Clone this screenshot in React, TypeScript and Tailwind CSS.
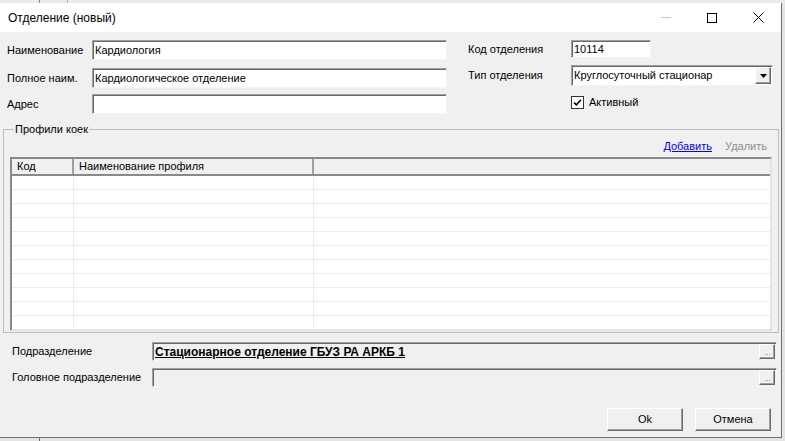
import React from "react";

const sunken =
  "border border-t-[#a0a0a0] border-l-[#a0a0a0] border-r-[#f5f5f5] border-b-[#f5f5f5] shadow-[inset_1px_1px_0_#696969]";
const raised =
  "border border-t-[#fff] border-l-[#fff] border-r-[#696969] border-b-[#696969] shadow-[inset_-1px_-1px_0_#a0a0a0]";

function Field({ label, value, w }: { label: string; value: string; w: string }) {
  return (
    <div className="flex items-center h-[20px]">
      <span className="w-[85px] shrink-0">{label}</span>
      <div className={`${w} h-[20px] bg-white ${sunken} flex items-center pl-[2px] overflow-hidden whitespace-nowrap`}>
        {value}
      </div>
    </div>
  );
}

function EllipsisBtn() {
  return (
    <div className={`w-[16px] h-[15px] ${raised} bg-[#f0f0f0] flex items-end justify-center gap-[1px] pb-[3px] shrink-0`}>
      <div className="w-px h-px bg-[#9a9a9a]" />
      <div className="w-px h-px bg-[#9a9a9a]" />
      <div className="w-px h-px bg-[#9a9a9a]" />
    </div>
  );
}

export default function App() {
  const rows = Array.from({ length: 12 });

  return (
    <div className="w-[785px] h-[441px] overflow-hidden bg-[#f0f0f0] font-['Liberation_Sans',Arial,sans-serif] text-[11px] text-black">
      {/* background app strip */}
      <div className="h-[3px] flex bg-[#e9e9e9]">
        <div className="w-[40px] border-r border-[#8a8a8a]" />
        <div className="w-[28px] border-r border-[#b0b0b0]" />
      </div>

      <div className="flex h-[435px]">
        {/* window */}
        <div className="w-[782px] flex flex-col border-r border-b border-[#6f6f6f]">
          {/* title bar */}
          <div className="h-[29px] bg-white flex items-center shrink-0">
            <span className="pl-[8px] text-[12px] font-['Liberation_Sans',sans-serif]">Отделение (новый)</span>
            <div className="ml-auto flex items-center h-full">
              <div className="w-[46px] flex justify-center">
                <div className="w-[10px] h-px bg-[#c8c8c8]" />
              </div>
              <div className="w-[46px] flex justify-center">
                <div className="w-[10px] h-[10px] border border-black" />
              </div>
              <div className="w-[46px] flex justify-center">
                <svg width="11" height="11" viewBox="0 0 11 11">
                  <path d="M0.5 0.5 L10.5 10.5 M10.5 0.5 L0.5 10.5" stroke="#000" strokeWidth="1" />
                </svg>
              </div>
            </div>
          </div>

          {/* client area */}
          <div className="flex-1 flex flex-col bg-[#f0f0f0]">
            {/* top fields */}
            <div className="flex pt-[8px]">
              <div className="w-[447px] pl-[7px] flex flex-col">
                <Field label="Наименование" value="Кардиология" w="w-[355px]" />
                <div className="mt-[8px]">
                  <Field label="Полное наим." value="Кардиологическое отделение" w="w-[355px]" />
                </div>
                <div className="mt-[6px]">
                  <Field label="Адрес" value="" w="w-[355px]" />
                </div>
              </div>
              <div className="ml-[21px] flex flex-col">
                <div className="flex items-center h-[18px]">
                  <span className="w-[103px]">Код отделения</span>
                  <div className={`w-[80px] h-[18px] bg-white ${sunken} flex items-center pl-[2px]`}>10114</div>
                </div>
                <div className="flex items-center h-[21px] mt-[7px]">
                  <span className="w-[103px]">Тип отделения</span>
                  <div className={`w-[202px] h-[21px] bg-white ${sunken} flex items-center pl-[2px]`}>
                    <span>Круглосуточный стационар</span>
                    <div className={`ml-auto mr-[1px] w-[16px] h-[17px] ${raised} bg-[#f0f0f0] flex items-center justify-center`}>
                      <svg width="7" height="4" viewBox="0 0 7 4">
                        <path d="M0 0 H7 L3.5 4 Z" fill="#000" />
                      </svg>
                    </div>
                  </div>
                </div>
                <div className="flex items-center h-[13px] mt-[10px] ml-[103px]">
                  <div className="w-[13px] h-[13px] bg-white border border-[#333] flex items-center justify-center">
                    <svg width="9" height="9" viewBox="0 0 9 9">
                      <path d="M1 4.5 L3.3 6.8 L8 1.8" stroke="#000" strokeWidth="1.6" fill="none" />
                    </svg>
                  </div>
                  <span className="ml-[5px]">Активный</span>
                </div>
              </div>
            </div>

            {/* group box */}
            <fieldset className="mt-[9px] ml-[3px] w-[776px] border border-[#bcbcbc] px-[6px] pb-[1px]">
              <legend className="ml-[4px] px-[1px] leading-[13px]">Профили коек</legend>
              <div className="flex justify-end items-center gap-[13px] pr-[5px] h-[15px] mt-[3px] mb-[3px]">
                <span className="text-[#0000ff] underline">Добавить</span>
                <span className="text-[#8d8d8d]">Удалить</span>
              </div>
              <div className="h-[174px] border-2 border-t-[#8a8a8a] border-l-[#8a8a8a] border-r-[#e3e3e3] border-b-[#e3e3e3] bg-white overflow-hidden flex flex-col">
                <div className="flex h-[17px] shrink-0 bg-[#f0f0f0] border-b-2 border-[#8a8a8a]">
                  <div className="w-[62px] border-r-2 border-r-[#a0a0a0] pl-[5px] flex items-center">Код</div>
                  <div className="w-[240px] border-r-2 border-r-[#a0a0a0] pl-[5px] flex items-center">Наименование профиля</div>
                  <div className="flex-1" />
                </div>
                {rows.map((_, i) => (
                  <div key={i} className="flex h-[14px] shrink-0 border-b border-[#ececec]">
                    <div className="w-[62px] border-r border-[#ececec]" />
                    <div className="w-[240px] border-r border-[#ececec]" />
                    <div className="flex-1" />
                  </div>
                ))}
              </div>
            </fieldset>

            {/* subdivision fields */}
            <div className="flex items-center mt-[9px] pl-[12px] h-[19px]">
              <span className="w-[140px]">Подразделение</span>
              <div className={`w-[625px] h-[19px] bg-[#f0f0f0] ${sunken} flex items-center pl-[2px] pr-[1px]`}>
                <span className="font-bold underline text-[12px]">Стационарное отделение ГБУЗ РА АРКБ 1</span>
                <div className="ml-auto"><EllipsisBtn /></div>
              </div>
            </div>
            <div className="flex items-center mt-[7px] pl-[12px] h-[19px]">
              <span className="w-[140px]">Головное подразделение</span>
              <div className={`w-[625px] h-[19px] bg-[#f0f0f0] ${sunken} flex items-center pl-[2px] pr-[1px]`}>
                <div className="ml-auto"><EllipsisBtn /></div>
              </div>
            </div>

            {/* buttons */}
            <div className="flex justify-end gap-[12px] pr-[10px] mt-[21px]">
              <div className={`w-[76px] h-[23px] ${raised} bg-[#f0f0f0] flex items-center justify-center`}>Ok</div>
              <div className={`w-[76px] h-[23px] ${raised} bg-[#f0f0f0] flex items-center justify-center`}>Отмена</div>
            </div>
          </div>
        </div>
        <div className="w-[3px] bg-[#e4e4e4]" />
      </div>

      <div className="h-[3px] flex bg-[#e3e3e3]">
        <div className="w-[40px] border-r border-[#6f6f6f]" />
      </div>
    </div>
  );
}
